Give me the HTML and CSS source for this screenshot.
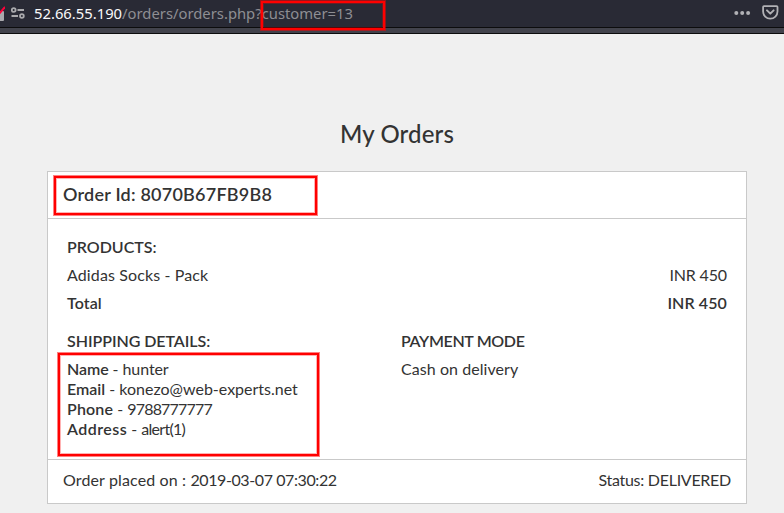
FILE: index.html
```
<!DOCTYPE html>
<html lang="en">
<head>
<meta charset="utf-8">
<title>My Orders</title>
<link rel="stylesheet" href="styles.css">
</head>
<body>
<header class="browser">
  <svg class="lock" width="5" height="20" viewBox="0 0 5 20"><path d="M0 7h3q1 0 1 1v8q0 1-1 1H0z" fill="#a9a9ad"/><path d="M-1 10L5 3" stroke="#ff0039" stroke-width="2"/></svg>
  <svg class="perms" width="14" height="12" viewBox="0 0 14 12" fill="none" stroke="#aaaaad" stroke-width="1.8"><circle cx="2.7" cy="3" r="1.9"/><path d="M6.5 3H13M0.5 9H7"/><circle cx="10.9" cy="9" r="1.9"/></svg>
  <div class="url"><span class="host">52.66.55.190</span>/orders/orders.php?<span class="query">customer=13</span></div>
  <svg class="dots" width="17" height="6" viewBox="0 0 17 6" fill="#b1b1b5"><circle cx="2.3" cy="3" r="2"/><circle cx="8.2" cy="3" r="2"/><circle cx="14.1" cy="3" r="2"/></svg>
  <svg class="pocket" width="17" height="15" viewBox="0 0 17 15" fill="none" stroke="#b1b1b5" stroke-width="1.8" stroke-linecap="round" stroke-linejoin="round"><path d="M2 1.1H14.6Q15.5 1.1 15.5 2V6.5A7.2 7.2 0 0 1 1.1 6.5V2Q1.1 1.1 2 1.1Z"/><path d="M5 5.4L8.3 8.6L11.6 5.4" stroke-width="2"/></svg>
</header>
<main>
  <h1>My Orders</h1>
  <section class="card">
    <div class="card-head"><h2>Order Id: 8070B67FB9B8</h2><i class="mark mark-id"></i></div>
    <div class="card-body">
      <h3 class="products">PRODUCTS:</h3>
      <div class="line"><span class="item">Adidas Socks - Pack</span><span class="price">INR 450</span></div>
      <div class="line total"><b>Total</b><b>INR 450</b></div>
      <div class="columns">
        <div class="shipping">
          <h3>SHIPPING DETAILS:</h3>
          <p class="name"><b>Name</b> - hunter</p>
          <p class="email"><b>Email</b> - konezo@web-experts.net</p>
          <p class="phone"><b>Phone</b> - <span>9788777777</span></p>
          <p class="address"><b>Address</b> - <span>alert(1)</span></p>
          <i class="mark mark-ship"></i>
        </div>
        <div>
          <h3 class="payment">PAYMENT MODE</h3>
          <p class="cash">Cash on delivery</p>
        </div>
      </div>
    </div>
    <div class="card-foot"><span><span class="placed">Order placed on : </span><span class="date">2019-03-07 07:30:22</span></span><span class="status">Status: DELIVERED</span></div>
  </section>
</main>
<i class="mark mark-url"></i>
</body>
</html>
```
FILE: styles.css
```
* { box-sizing: border-box; }
body { margin: 0; background: #f0f0f0; color: #333; font: 16px/20px Lato, "Liberation Sans", sans-serif; position: relative; height: 513px; overflow: hidden; }
h1, h2, h3, p { margin: 0; font-weight: 600; }
p { font-weight: 400; }
b { font-weight: 600; }
.browser { height: 34px; display: flex; align-items: center; padding: 0 5px 6px 0; background: linear-gradient(#292a35 27px, #0c0c0d 27px 28px, #42434c 28px 33px, #0c0c0d 33px); }
.lock { flex: none; }
.perms { flex: none; margin: -2px 9px 0 6px; }
.url { flex: 1; margin-top: -2px; font: 14.8px/28px "Noto Sans", sans-serif; color: #8e8e93; white-space: nowrap; }
.host { color: #f9f9fa; }
.dots { margin-right: 11px; margin-top: -2px; }
.pocket { margin-top: -3px; }
main { padding: 87px 37px 0 47px; }
h1 { text-align: center; font-size: 24px; line-height: 26px; font-weight: 500; letter-spacing: .15px; width: 700px; }
.card { width: 700px; margin-top: 24px; background: #fff; border: 1px solid #c9c9c9; }
.card-head { position: relative; height: 47px; padding: 0 15px; border-bottom: 1px solid #c9c9c9; }
h2 { font-size: 18px; line-height: 45px; letter-spacing: .22px; }
h3 { font-size: 16px; line-height: 20px; }
.card-body { height: 241px; padding: 18px 19px 0; border-bottom: 1px solid #c9c9c9; }
.line { display: flex; justify-content: space-between; margin-top: 8px; }
.item { letter-spacing: .12px; }
.price { letter-spacing: -.15px; }
.total { letter-spacing: .1px; }
.columns { display: grid; grid-template-columns: 334px 1fr; margin-top: 18px; }
.columns h3 { margin-bottom: 8px; letter-spacing: -.05px; }
.shipping { position: relative; }
.name { letter-spacing: -.08px; }
.phone b { letter-spacing: .15px; }
.phone span { letter-spacing: -.8px; }
.address b { letter-spacing: .45px; }
.address span { letter-spacing: -.7px; }
.columns .payment { letter-spacing: -.35px; }
.cash { letter-spacing: .06px; }
.card-foot { display: flex; justify-content: space-between; padding: 0 15px; height: 43px; line-height: 40px; }
.placed { letter-spacing: .13px; white-space: pre; }
.date { letter-spacing: -.4px; }
.status { letter-spacing: -.27px; }
.mark { position: absolute; border: 2px solid #f00; box-shadow: 0 0 0 1px rgba(255,0,0,.5), inset 0 0 0 1px rgba(255,0,0,.3); }
.mark-id { left: 6px; top: 4px; width: 263px; height: 39px; }
.mark-ship { left: -9px; top: 22px; width: 261px; height: 103px; }
.mark-url { left: 261px; top: 1px; width: 124px; height: 29px; }
```
